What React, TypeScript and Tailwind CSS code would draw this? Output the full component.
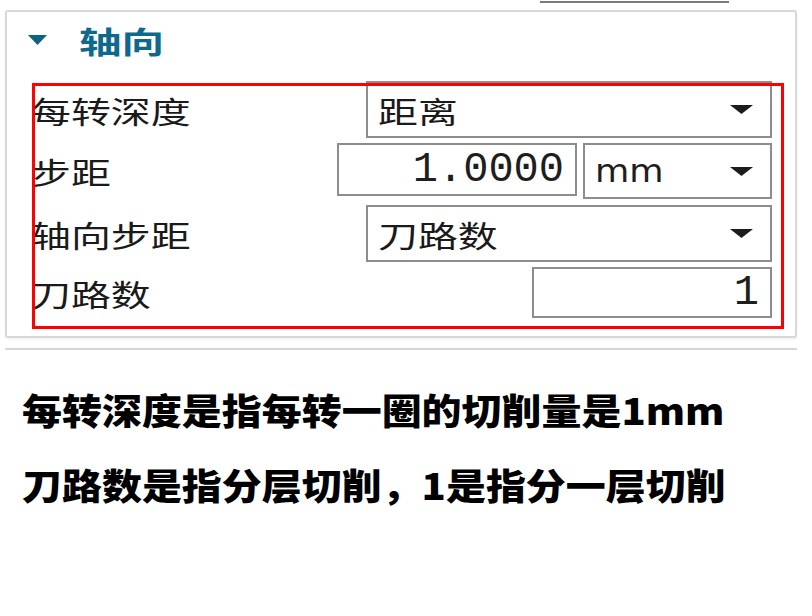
import React from "react";

const cjk = "font-['Noto_Sans_CJK_SC','Noto_Sans',sans-serif]";

function Label({ text }: { text: string }) {
  return (
    <span className={`${cjk} inline-block origin-left scale-x-[1.33] text-[30px] leading-none text-[#1a1a1a] whitespace-nowrap`}>
      {text}
    </span>
  );
}

function Caret() {
  return (
    <svg width="23" height="9" viewBox="0 0 23 9" className="shrink-0">
      <polygon points="0,0 23,0 11.5,9" fill="#1c1c1c" />
    </svg>
  );
}

function Select({ children, className = "" }: { children: React.ReactNode; className?: string }) {
  return (
    <div className={`flex items-center justify-between border-2 border-[#8d8d8d] bg-white pl-[10px] pr-[17px] ${className}`}>
      {children}
      <Caret />
    </div>
  );
}

function NumberBox({ value, className = "" }: { value: string; className?: string }) {
  return (
    <div className={`flex items-center justify-end border-2 border-[#8d8d8d] bg-white pr-[11px] ${className}`}>
      <span className="font-['Liberation_Mono',monospace] text-[42px] leading-none text-[#1e1e1e] whitespace-nowrap">
        {value}
      </span>
    </div>
  );
}

export default function App() {
  return (
    <div className="relative h-[616px] w-[812px] overflow-hidden bg-white">
      {/* edge of the field above */}
      <div className="ml-[540px] h-[3px] w-[189px] border-b-2 border-[#7a7a7a] bg-white" />

      {/* axial section */}
      <div className="relative ml-[5px] mt-[7px] h-[328px] w-[792px] rounded-[3px] border-2 border-[#d8d8d8] shadow-[0_1px_2px_rgba(0,0,0,0.08)]">
        <div className="flex h-[56px] items-center">
          <svg width="19" height="10" viewBox="0 0 19 10" className="ml-[21px]">
            <polygon points="0,0 19,0 9.5,10" fill="#0d6385" />
          </svg>
          <span className={`${cjk} ml-[32px] inline-block origin-left scale-x-[1.42] text-[30px] font-bold leading-none text-[#0e6a8d]`}>
            轴向
          </span>
        </div>

        <div className="mt-[13px] flex flex-col pl-[24px] pr-[23px]">
          <div className="flex h-[57px] items-center justify-between">
            <Label text="每转深度" />
            <Select className="h-[57px] w-[406px]">
              <Label text="距离" />
            </Select>
          </div>

          <div className="mt-[5px] flex h-[56px] items-center justify-between">
            <Label text="步距" />
            <div className="flex items-start gap-[6px]">
              <NumberBox value="1.0000" className="h-[53px] w-[240px]" />
              <Select className="h-[56px] w-[189px]">
                <span className="inline-block origin-left scale-x-[1.1] font-['DejaVu_Sans',sans-serif] text-[32px] leading-none text-[#1e1e1e]">
                  mm
                </span>
              </Select>
            </div>
          </div>

          <div className="mt-[6px] flex h-[57px] items-center justify-between">
            <Label text="轴向步距" />
            <Select className="h-[57px] w-[406px]">
              <Label text="刀路数" />
            </Select>
          </div>

          <div className="mt-[5px] flex h-[51px] items-center justify-between">
            <Label text="刀路数" />
            <NumberBox value="1" className="h-[51px] w-[240px]" />
          </div>
        </div>

        {/* highlight frame over the fields */}
        <div className="pointer-events-none absolute left-[25px] top-[71px] h-[246px] w-[752px] border-[3px] border-[#ff0000]" />
      </div>

      {/* next section edge */}
      <div className="ml-[5px] mt-[10px] w-[792px] border-t-2 border-[#d6d6d6]" />

      <div className={`${cjk} ml-[22px] mt-[41px] text-[36px] font-black leading-[36px] text-black`}>
        <div className="inline-block origin-left scale-x-[1.11] whitespace-nowrap">每转深度是指每转一圈的切削量是1mm</div>
        <div className="mt-[39px] block">
          <span className="inline-block origin-left scale-x-[1.11] whitespace-nowrap">刀路数是指分层切削，1是指分一层切削</span>
        </div>
      </div>
    </div>
  );
}
